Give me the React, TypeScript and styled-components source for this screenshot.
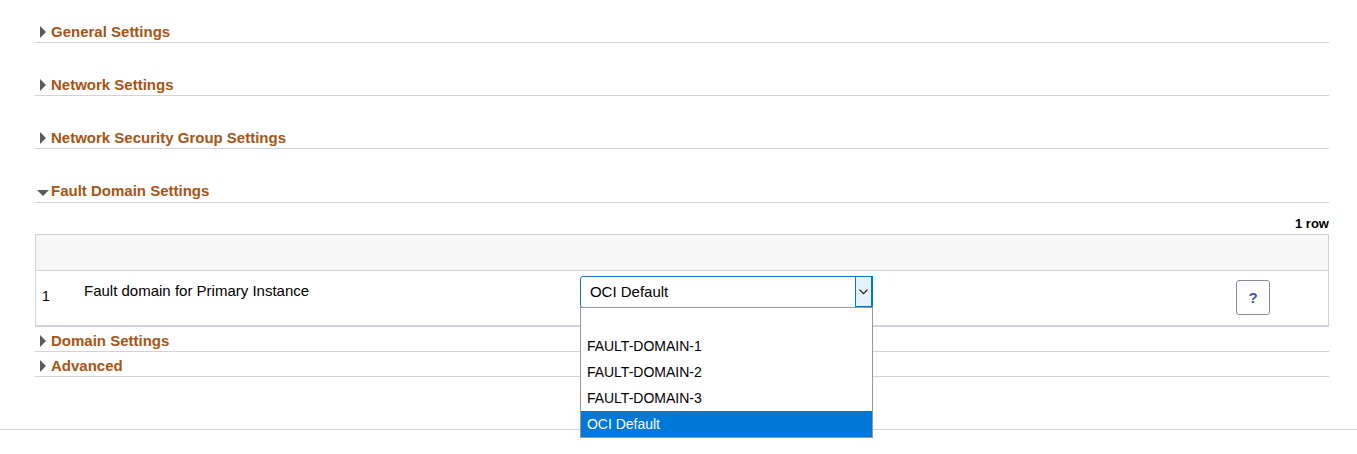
import React, { useState } from "react";
import styled, { createGlobalStyle } from "styled-components";

const line = "#cfd3dc";

const GlobalStyle = createGlobalStyle`
  * { box-sizing: border-box; }
  body {
    margin: 0;
    background: #fff;
    color: #000;
    font-family: "Liberation Sans", Arial, sans-serif;
    font-size: 15px;
    line-height: 20px;
  }
  button, select { font: inherit; color: inherit; }
`;

const Page = styled.main`
  padding-bottom: 24px;
`;

const Content = styled.div`
  padding: 22px 28px 48px 35px;
  border-bottom: 1px solid ${line};
`;

const SectionHeading = styled.h2<{ $spaced?: boolean; $open?: boolean }>`
  display: flex;
  margin: 0 0 ${(p) => (p.$spaced ? 32 : 4)}px;
  padding-bottom: ${(p) => (p.$open ? 1 : 0)}px;
  border-bottom: 1px solid ${line};
`;

const Toggle = styled.button`
  display: flex;
  align-items: center;
  height: 20px;
  margin: 0;
  padding: 0;
  border: 0;
  background: none;
  color: #a75414;
  font-size: 15px;
  font-weight: bold;
  cursor: pointer;
`;

const Marker = styled.svg`
  display: block;
  width: 16px;
  height: 14px;
  fill: #5b5b5b;
`;

const RowCount = styled.div`
  padding-top: 7px;
  text-align: right;
  font-size: 13px;
  font-weight: bold;
`;

const Grid = styled.table`
  width: 100%;
  table-layout: fixed;
  border-spacing: 0;
  border: 1px solid ${line};
  border-bottom-width: 2px;
  margin-bottom: 4px;
`;

const HeadCell = styled.th<{ $width?: string }>`
  width: ${(p) => p.$width ?? "auto"};
  height: 36px;
  padding: 0;
  background: #f7f7f7;
  border-bottom: 1px solid ${line};
`;

const Cell = styled.td<{ $top: number; $left?: number }>`
  height: 54px;
  vertical-align: top;
  padding: ${(p) => p.$top}px 0 0 ${(p) => p.$left ?? 0}px;
`;

const RowNumber = styled.span`
  font-size: 14px;
`;

const SelectBox = styled.div`
  position: relative;
  width: 293px;
  height: 32px;
`;

const Select = styled.select`
  appearance: none;
  display: block;
  width: 100%;
  height: 32px;
  padding: 0 24px 0 9px;
  border: 1px solid #1f6fc5;
  border-radius: 3px;
  background: #fff;
  outline: none;
`;

const Arrow = styled.span`
  position: absolute;
  top: 0;
  right: 0;
  display: flex;
  align-items: center;
  justify-content: center;
  width: 18px;
  height: 31px;
  border: 1px solid #0078d7;
  border-right-width: 2px;
  background: #e5f1fb;
  pointer-events: none;
`;

const Chevron = styled.svg`
  width: 9px;
  height: 6px;
  fill: none;
  stroke: #1c1030;
  stroke-width: 1.2;
`;

const Options = styled.ul`
  position: absolute;
  z-index: 1;
  top: 31px;
  left: 0;
  width: 100%;
  margin: 0;
  padding: 0;
  list-style: none;
  background: #fff;
  border: 1px solid #999;
`;

const Option = styled.li<{ $selected: boolean }>`
  height: ${(p) => (p.children ? 26 : 25)}px;
  padding-left: 6px;
  font-size: 14px;
  line-height: 26px;
  cursor: default;
  color: ${(p) => (p.$selected ? "#fff" : "#000")};
  background: ${(p) => (p.$selected ? "#0078d7" : "transparent")};
`;

const HelpButton = styled.button`
  display: block;
  width: 34px;
  height: 35px;
  padding: 0;
  border: 1px solid #858c99;
  border-radius: 3px;
  background: #fff;
  color: #4355a5;
  font-weight: bold;
`;

const choices = ["", "FAULT-DOMAIN-1", "FAULT-DOMAIN-2", "FAULT-DOMAIN-3", "OCI Default"];

function Section({ title, open, spaced }: { title: string; open?: boolean; spaced?: boolean }) {
  return (
    <SectionHeading $spaced={spaced} $open={open}>
      <Toggle type="button" aria-expanded={!!open}>
        <Marker viewBox="0 0 16 14" aria-hidden="true">
          <path d={open ? "M2 6H14L8 12Z" : "M5 1V13L11 7Z"} />
        </Marker>
        {title}
      </Toggle>
    </SectionHeading>
  );
}

export default function App() {
  const [value, setValue] = useState("OCI Default");
  return (
    <Page>
      <GlobalStyle />
      <Content>
        <Section title="General Settings" spaced />
        <Section title="Network Settings" spaced />
        <Section title="Network Security Group Settings" spaced />
        <Section title="Fault Domain Settings" open />
        <RowCount>1 row</RowCount>
        <Grid>
          <thead>
            <tr>
              <HeadCell $width="40px" />
              <HeadCell $width="39%" />
              <HeadCell />
              <HeadCell $width="92px" />
            </tr>
          </thead>
          <tbody>
            <tr>
              <Cell $top={15} $left={6}>
                <RowNumber>1</RowNumber>
              </Cell>
              <Cell $top={10} $left={8}>
                <label htmlFor="fault-domain">Fault domain for Primary Instance</label>
              </Cell>
              <Cell $top={5}>
                <SelectBox>
                  <Select id="fault-domain" value={value} onChange={(e) => setValue(e.target.value)}>
                    {choices.map((c) => (
                      <option key={c} value={c}>{c}</option>
                    ))}
                  </Select>
                  <Arrow>
                    <Chevron viewBox="0 0 9 6" aria-hidden="true">
                      <path d="M0.5 0.7L4.5 4.7L8.5 0.7" />
                    </Chevron>
                  </Arrow>
                  <Options role="listbox" aria-label="Fault domain for Primary Instance">
                    {choices.map((c) => (
                      <Option
                        key={c}
                        role="option"
                        aria-selected={c === value}
                        $selected={c === value}
                        onClick={() => setValue(c)}
                      >
                        {c}
                      </Option>
                    ))}
                  </Options>
                </SelectBox>
              </Cell>
              <Cell $top={9}>
                <HelpButton type="button" title="Help">?</HelpButton>
              </Cell>
            </tr>
          </tbody>
        </Grid>
        <Section title="Domain Settings" />
        <Section title="Advanced" />
      </Content>
    </Page>
  );
}
